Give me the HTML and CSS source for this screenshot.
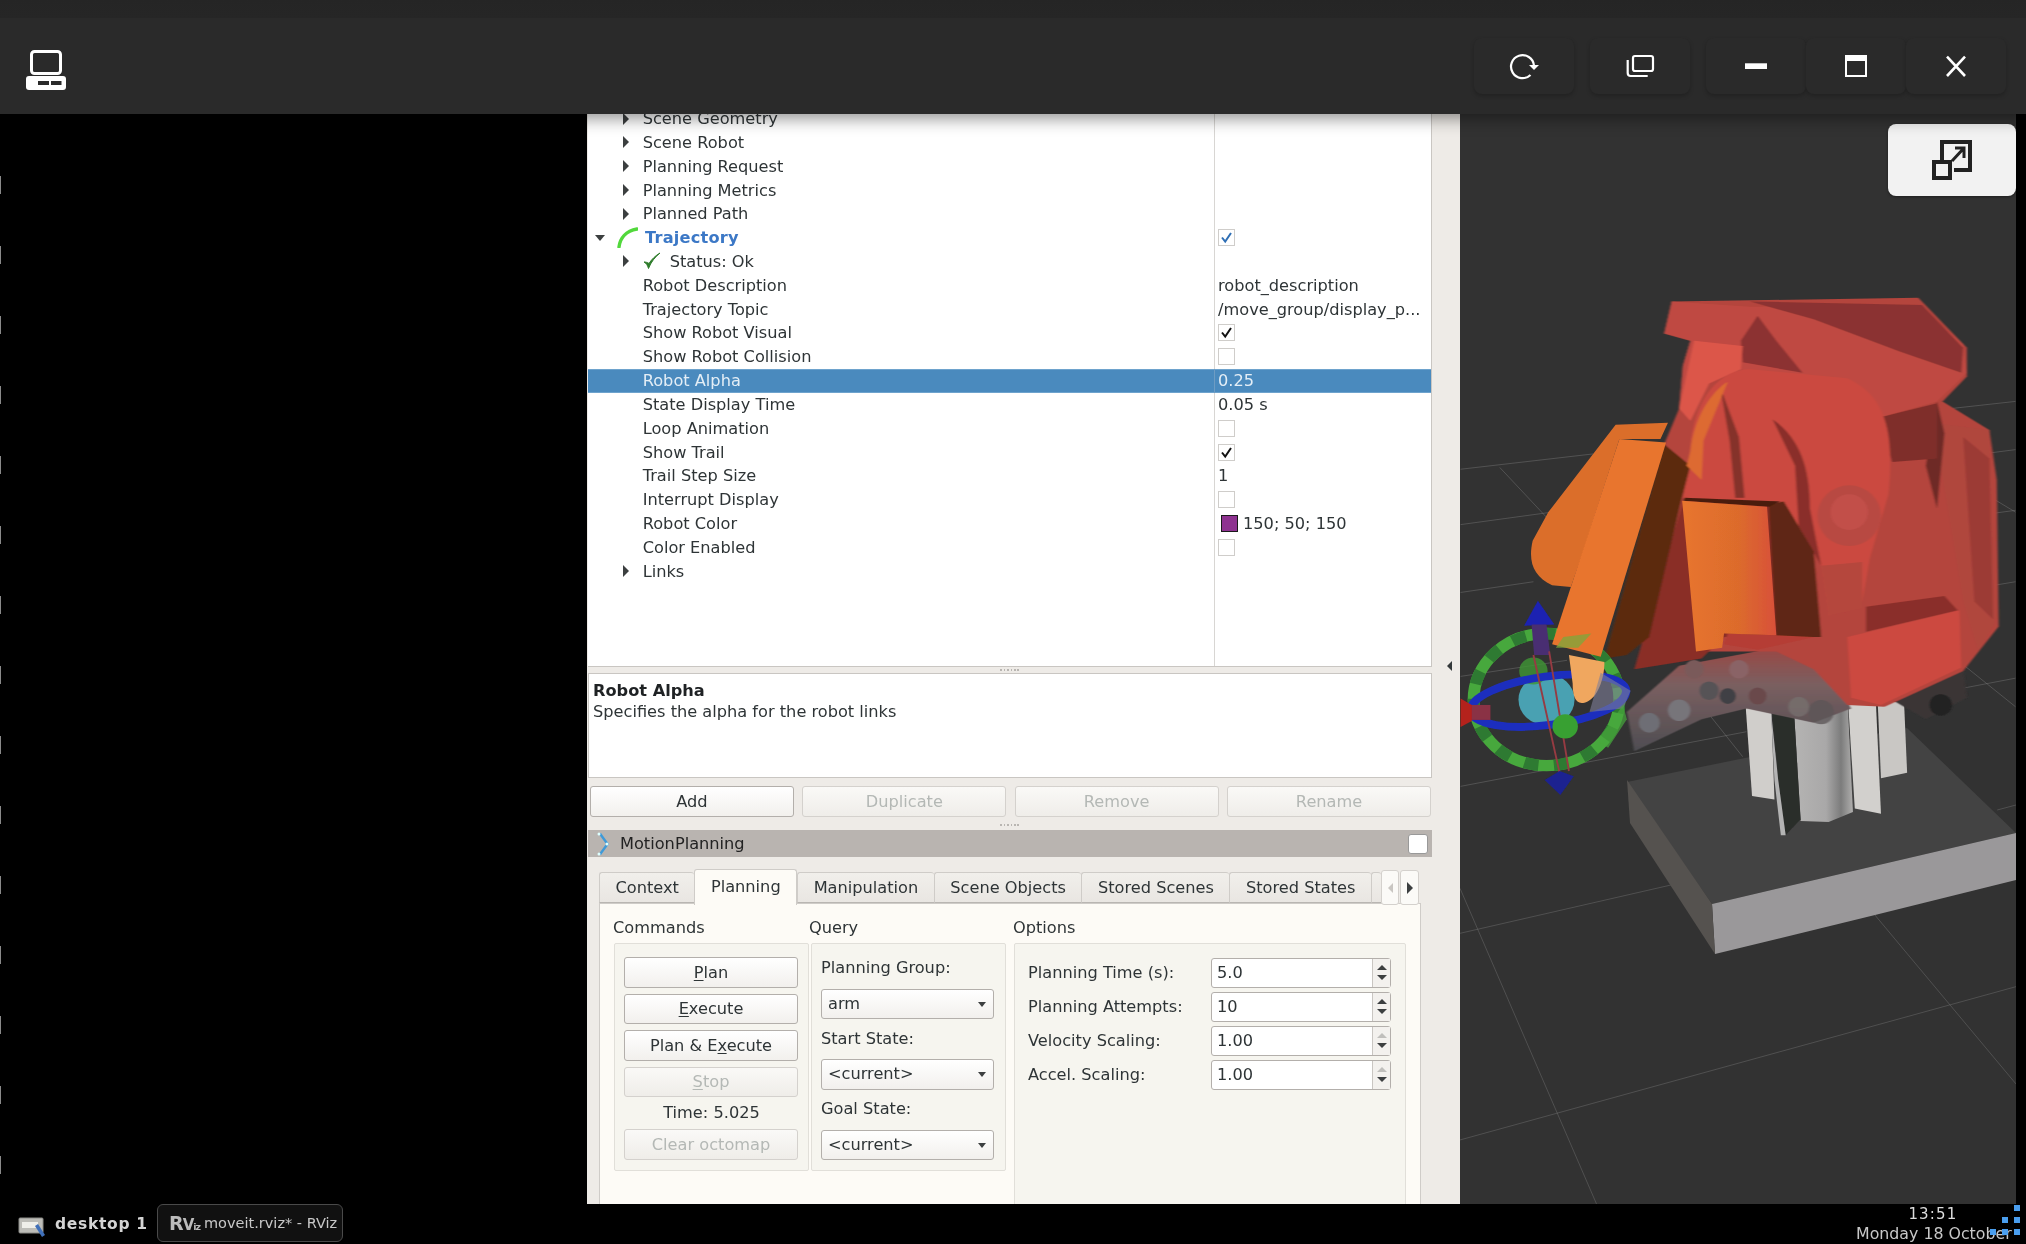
FILE: index.html
```html
<!DOCTYPE html>
<html lang="en">
<head>
<meta charset="utf-8">
<title>moveit.rviz* - RViz</title>
<link rel="stylesheet" href="styles.css">
</head>
<body>
<div class="screen">
  <header class="topbar">
    <svg class="host-icon" width="40" height="40" viewBox="26 50 40 40"><rect x="31.500" y="51.500" width="29" height="22" rx="3" fill="none" stroke="#fff" stroke-width="3"/><rect x="26" y="76" width="40" height="14" rx="3" fill="#fff"/><rect x="38" y="81" width="11" height="4" fill="#2a2a2a"/><rect x="51" y="81" width="10.500" height="4" fill="#2a2a2a"/></svg>
    <div class="win-btns">
      <button class="win-btn"><svg width="32" height="32" viewBox="0 0 32 32"><path d="M26 15.500A11.500 11.500 0 1 0 22.500 25" fill="none" stroke="#fff" stroke-width="2.200"/><path d="M21 15h10l-5 5z" fill="#fff"/></svg></button>
      <button class="win-btn"><svg width="32" height="32" viewBox="0 0 32 32"><rect x="9" y="6" width="20" height="15" rx="2" fill="none" stroke="#fff" stroke-width="2.200"/><path d="M3.700 10v13a3 3 0 0 0 3 3h17" fill="none" stroke="#fff" stroke-width="2.200"/></svg></button>
      <button class="win-btn"><svg width="32" height="32" viewBox="0 0 32 32"><rect x="5" y="13.300" width="22" height="5.700" fill="#fff"/></svg></button>
      <button class="win-btn win-btn-tight"><svg width="32" height="32" viewBox="0 0 32 32"><rect x="6" y="6" width="20" height="20" fill="none" stroke="#fff" stroke-width="2"/><rect x="5" y="5" width="22" height="6" fill="#fff"/></svg></button>
      <button class="win-btn win-btn-tight"><svg width="32" height="32" viewBox="0 0 32 32"><path d="M7 6.700l18 19.300M25 6.700L7 26" fill="none" stroke="#fff" stroke-width="2.600"/></svg></button>
    </div>
  </header>

  <main class="desk">
    <div class="void"><span class="void-edge"></span></div>

    <section class="rviz">
      <div class="tree-col">
        <div class="tree">
          <div class="rows">
            <div class="row"><div class="name child"><i class="arr-r"></i>Scene Geometry</div><div class="val"></div></div>
            <div class="row"><div class="name child"><i class="arr-r"></i>Scene Robot</div><div class="val"></div></div>
            <div class="row"><div class="name child"><i class="arr-r"></i>Planning Request</div><div class="val"></div></div>
            <div class="row"><div class="name child"><i class="arr-r"></i>Planning Metrics</div><div class="val"></div></div>
            <div class="row"><div class="name child"><i class="arr-r"></i>Planned Path</div><div class="val"></div></div>
            <div class="row"><div class="name root"><i class="arr-d"></i><svg class="traj-icon" width="21" height="21" viewBox="0 0 21 21"><path d="M2 20C3 11 9 4 20 2" fill="none" stroke="#52d83c" stroke-width="3.400" stroke-linecap="round"/></svg><b class="traj">Trajectory</b></div><div class="val"><span class="check"><svg width="15" height="15" viewBox="0 0 15 15"><path d="M3 7.500l3.200 4L12 3" fill="none" stroke="#2f6fb5" stroke-width="2"/></svg></span></div></div>
            <div class="row"><div class="name child"><i class="arr-r"></i><svg class="ok-icon" width="18" height="18" viewBox="0 0 18 18"><path d="M1 10c2 1 3.500 3 4.500 6.500C8 10 12 5 17 1c-5 3-8.500 6.500-11 10.500C4.500 10.500 3 10 1 10z" fill="#2f7d2c" stroke="#2f7d2c"/></svg>Status: Ok</div><div class="val"></div></div>
            <div class="row"><div class="name child"><i class="arr-none"></i>Robot Description</div><div class="val">robot_description</div></div>
            <div class="row"><div class="name child"><i class="arr-none"></i>Trajectory Topic</div><div class="val">/move_group/display_p...</div></div>
            <div class="row"><div class="name child"><i class="arr-none"></i>Show Robot Visual</div><div class="val"><span class="check"><svg width="15" height="15" viewBox="0 0 15 15"><path d="M3 7.500l3.200 4L12 3" fill="none" stroke="#111" stroke-width="2"/></svg></span></div></div>
            <div class="row"><div class="name child"><i class="arr-none"></i>Show Robot Collision</div><div class="val"><span class="check"></span></div></div>
            <div class="row row-sel"><div class="name child"><i class="arr-none"></i>Robot Alpha</div><div class="val">0.25</div></div>
            <div class="row"><div class="name child"><i class="arr-none"></i>State Display Time</div><div class="val">0.05 s</div></div>
            <div class="row"><div class="name child"><i class="arr-none"></i>Loop Animation</div><div class="val"><span class="check"></span></div></div>
            <div class="row"><div class="name child"><i class="arr-none"></i>Show Trail</div><div class="val"><span class="check"><svg width="15" height="15" viewBox="0 0 15 15"><path d="M3 7.500l3.200 4L12 3" fill="none" stroke="#111" stroke-width="2"/></svg></span></div></div>
            <div class="row"><div class="name child"><i class="arr-none"></i>Trail Step Size</div><div class="val">1</div></div>
            <div class="row"><div class="name child"><i class="arr-none"></i>Interrupt Display</div><div class="val"><span class="check"></span></div></div>
            <div class="row"><div class="name child"><i class="arr-none"></i>Robot Color</div><div class="val"><span class="swatch"></span>150; 50; 150</div></div>
            <div class="row"><div class="name child"><i class="arr-none"></i>Color Enabled</div><div class="val"><span class="check"></span></div></div>
            <div class="row"><div class="name child"><i class="arr-r"></i>Links</div><div class="val"></div></div>
          </div>
        </div>
        <div class="grip"></div>
        <div class="help">
          <div class="help-title">Robot Alpha</div>
          <div>Specifies the alpha for the robot links</div>
        </div>
        <div class="tool-btns">
          <button class="btn">Add</button>
          <button class="btn" disabled>Duplicate</button>
          <button class="btn" disabled>Remove</button>
          <button class="btn" disabled>Rename</button>
        </div>
        <div class="grip grip-b"></div>
        <div class="dock-title">
          <svg width="14" height="24" viewBox="0 0 14 24"><path d="M2 1l8 11-8 11 3 0 8-11-8-11z" fill="#3f9ad8"/><circle cx="3" cy="2" r="1.500" fill="#dff"/><circle cx="3" cy="22" r="1.500" fill="#dff"/><circle cx="11" cy="12" r="1.500" fill="#dff"/></svg>
          <span class="dock-name">MotionPlanning</span>
          <span class="dock-box"></span>
        </div>
        <div class="tabs-wrap">
          <div class="tabs">
            <div class="tab">Context</div>
            <div class="tab tab-on">Planning</div>
            <div class="tab">Manipulation</div>
            <div class="tab">Scene Objects</div>
            <div class="tab">Stored Scenes</div>
            <div class="tab">Stored States</div>
            <div class="tab tab-cut"></div>
            <div class="tab-scroll"><i class="arr-l"></i></div>
            <div class="tab-scroll"><i class="arr-r"></i></div>
          </div>
          <div class="pane">
            <div class="grp grp-cmd">
              <div class="grp-label">Commands</div>
              <div class="grp-box cmd-box">
                <button class="btn"><u>P</u>lan</button>
                <button class="btn"><u>E</u>xecute</button>
                <button class="btn">Plan &amp; E<u>x</u>ecute</button>
                <button class="btn" disabled><u>S</u>top</button>
                <div class="time">Time: 5.025</div>
                <button class="btn" disabled>Clear octomap</button>
              </div>
            </div>
            <div class="grp grp-query">
              <div class="grp-label">Query</div>
              <div class="grp-box query-box">
                <div class="q-label">Planning Group:</div>
                <div class="combo">arm<i class="arr-d small"></i></div>
                <div class="q-label">Start State:</div>
                <div class="combo">&lt;current&gt;<i class="arr-d small"></i></div>
                <div class="q-label">Goal State:</div>
                <div class="combo">&lt;current&gt;<i class="arr-d small"></i></div>
              </div>
            </div>
            <div class="grp grp-opt">
              <div class="grp-label">Options</div>
              <div class="grp-box opt-box">
                <div class="opt"><span>Planning Time (s):</span><div class="spin"><span class="spin-v">5.0</span><span class="spin-b"><i class="up"></i><i class="dn"></i></span></div></div>
                <div class="opt"><span>Planning Attempts:</span><div class="spin"><span class="spin-v">10</span><span class="spin-b"><i class="up"></i><i class="dn"></i></span></div></div>
                <div class="opt"><span>Velocity Scaling:</span><div class="spin"><span class="spin-v">1.00</span><span class="spin-b"><i class="up off"></i><i class="dn"></i></span></div></div>
                <div class="opt"><span>Accel. Scaling:</span><div class="spin"><span class="spin-v">1.00</span><span class="spin-b"><i class="up off"></i><i class="dn"></i></span></div></div>
              </div>
            </div>
          </div>
        </div>
      </div>
      <div class="side-gap"><i class="arr-l dark"></i></div>
    </section>

    <section class="view">
      <svg class="scene" width="556" height="1090" viewBox="1460 114 556 1090">
        <defs>
          <filter id="soft" x="-5%" y="-5%" width="110%" height="110%"><feGaussianBlur stdDeviation="2.200"/></filter>
          <filter id="soft2" x="-5%" y="-5%" width="110%" height="110%"><feGaussianBlur stdDeviation="0.600"/></filter>
          <linearGradient id="cyl" x1="0" x2="1" y1="0" y2="0"><stop offset="0" stop-color="#b5b4b3"/><stop offset=".55" stop-color="#a9a8a8"/><stop offset=".8" stop-color="#7c7c7c"/><stop offset="1" stop-color="#b0afae"/></linearGradient>
          <linearGradient id="orgfade" x1="0" x2="1" y1="0" y2="0"><stop offset="0" stop-color="#e8752e"/><stop offset=".6" stop-color="#dc6b2c"/><stop offset="1" stop-color="#d8503a"/></linearGradient>
          <linearGradient id="band" x1="0" x2="0" y1="0" y2="1"><stop offset="0" stop-color="#a04440"/><stop offset=".4" stop-color="#7a5f60"/><stop offset="1" stop-color="#4e4d52"/></linearGradient>
        </defs>
        <g fill="none" stroke="#8a8a8a" stroke-width="1">
          <g transform="translate(1440 280) scale(.3737 .3571)">
            <path d="M55 530L410 487M55 685L300 650M55 875L250 845M55 1110L340 1065M55 1418L820 1265M1195 380L1540 340M1210 520L1540 475M1180 695L1540 645M1140 915L1540 845M1240 1175L1540 1115M160 525L290 670M700 1190L810 1335M1205 440L1540 650M1130 850L1540 1195"/>
          </g>
          <g transform="translate(1460 780) scale(.3546 .3333)">
            <path d="M0 460L595 315M0 1080L1568 620M0 325L385 1272M1170 405L1568 912M1515 90L1568 75"/>
          </g>
        </g>
        <polygon points="1627,782 1745,758 1907,728 2016,833 1712,904" fill="#434343"/>
        <polygon points="1712,904 2016,833 2016,880 1875,915 1715,954" fill="#9a989a"/>
        <polygon points="1627,780 1712,904 1715,954 1630,823" fill="#55524f"/>
        <g transform="translate(1440 280) scale(.3737 .3571)" filter="url(#soft2)">
          <path d="M815 1150L885 1160L895 1455L835 1445Z" fill="#d0cecb"/>
          <path d="M945 1170L1090 1160L1105 1490L1040 1518L965 1515Z" fill="url(#cyl)"/>
          <path d="M1090 1150L1165 1150L1180 1495L1110 1480Z" fill="#d2d0cd"/>
          <path d="M1170 1150L1240 1140L1250 1380L1180 1395Z" fill="#c9c7c4"/>
          <path d="M885 1160L945 1170L965 1510L925 1555L905 1400Z" fill="#2c2e2c"/>
          <path d="M885 1200L905 1400L925 1555L912 1555L895 1400Z" fill="#b4b4b4"/>
        </g>
        <g transform="translate(1440 280) scale(.3737 .3571)" filter="url(#soft)">
          <!-- gravel band -->
          <path d="M500 1210L640 1080L1000 1010L1100 1200L1000 1240L820 1200L700 1230L520 1320Z" fill="url(#band)"/>
          <path d="M1200 1170L1400 1085L1410 1170L1300 1230Z" fill="#3a3636"/>
          <circle cx="560" cy="1240" r="28" fill="#6e6e74"/><circle cx="640" cy="1205" r="30" fill="#77747a"/><circle cx="720" cy="1150" r="26" fill="#565256"/><circle cx="770" cy="1165" r="22" fill="#404044"/><circle cx="850" cy="1165" r="24" fill="#6a4a4c"/><circle cx="1020" cy="1210" r="34" fill="#5c5658" opacity=".8"/><circle cx="960" cy="1195" r="28" fill="#77706f" opacity=".8"/><circle cx="1340" cy="1190" r="30" fill="#222"/><circle cx="680" cy="1090" r="26" fill="#7a5a5a"/><circle cx="800" cy="1090" r="26" fill="#8a6466"/>
          <!-- silhouette -->
          <path d="M620 60L1280 50L1410 190L1410 270L1345 340L1470 420L1490 560L1495 970L1400 1095L1190 1195L1090 1190L1000 1090L900 1040L700 1040L620 1000L600 460L640 360L650 240L670 170L600 150Z" fill="#b4443c"/>
          <!-- red body -->
          <path d="M1320 400L1470 420L1485 960L1440 1040L1400 900Z" fill="#b0463e"/>
          <path d="M1400 440L1470 500L1480 950L1430 900Z" fill="#9c3a34"/>
          <path d="M1330 340L1300 520L1330 640L1350 430Z" fill="#6e2a26"/>
          <path d="M1175 385L1330 345L1330 500L1210 510Z" fill="#7f2f2b"/>
          <path d="M620 60L830 75L1280 70L1400 180L1410 260L1330 340L1175 385L1100 300L800 250L700 300L640 360L650 240L670 170L600 150Z" fill="#bf4a42"/>
          <path d="M830 60L1290 70L1400 190L1395 260L1230 200L1000 110Z" fill="#8b3230"/>
          <path d="M850 100L805 170L810 230L970 260L900 170Z" fill="#8c3030"/>
          <path d="M640 360L680 170L810 185L805 250L720 290L670 395Z" fill="#dc564a"/>
          <path d="M670 470C680 330 750 250 830 250L1090 275C1180 320 1220 400 1200 600L1150 780L1130 900L1040 940L1020 800L920 620L650 610Z" fill="#cb4a40"/>
          <path d="M750 300L800 440L815 610L790 610L775 450Z" fill="#85302a"/>
          <path d="M890 390C960 440 990 520 990 640L1020 800L960 690L950 520Z" fill="#8a2f2a"/>
          <circle cx="1095" cy="660" r="85" fill="#b84a42"/><circle cx="1095" cy="650" r="50" fill="#c2504a"/>
          <path d="M1090 1000L1390 925L1395 1085L1180 1190L1100 1170Z" fill="#cc4840"/>
          <path d="M1140 915L1350 885L1385 925L1140 985Z" fill="#8a2f2a"/>
          <!-- dark interior -->
          <path d="M650 620L520 1090L700 1060L760 1000L900 1000L900 620Z" fill="#8a2d25"/>
          <path d="M600 460L670 520L645 620L560 1000L500 1050L440 1060Z" fill="#5c2a10"/>
          <path d="M880 630L920 620L1000 760L1020 1000L900 1000Z" fill="#5e2812"/>
          <path d="M655 610L910 620L880 635L650 618Z" fill="#4a1f10"/>
          <path d="M770 990L900 995L1000 1000L850 1035L760 1020Z" fill="#b53d34"/>
          <path d="M1020 800L1130 790L1130 920L1040 940Z" fill="#b5463e"/>
          <path d="M670 480C680 380 730 310 770 285L705 450L700 560L660 520Z" fill="#dd6a32"/>
        </g>
        <g transform="translate(1440 280) scale(.3737 .3571)" filter="url(#soft2)">
          <!-- marker -->
          <ellipse cx="285" cy="1175" rx="195" ry="185" fill="none" stroke="#47a83c" stroke-width="32"/>
          <ellipse cx="285" cy="1175" rx="195" ry="185" fill="none" stroke="#2e7a30" stroke-width="32" stroke-dasharray="38 42"/>
          <ellipse cx="285" cy="1175" rx="75" ry="72" fill="#4aa1b2"/>
          <circle cx="250" cy="1095" r="38" fill="#3f9636" opacity=".8"/>
          <ellipse cx="290" cy="1178" rx="210" ry="68" transform="rotate(-8 290 1178)" fill="none" stroke="#1d2fbe" stroke-width="22"/>
          <path d="M262 898L306 965L225 968Z" fill="#1a22b2"/>
          <path d="M245 965L285 965L295 1050L252 1050Z" fill="#4a2f72"/>
          <path d="M250 1050L320 1380M292 1040L345 1375" stroke="#963a42" stroke-width="5" fill="none"/>
          <path d="M280 1400L320 1375L358 1390L322 1442Z" fill="#1a2090"/>
          <rect x="80" y="1190" width="55" height="42" fill="#8a3044"/>
          <path d="M55 1172L85 1190L85 1235L55 1252Z" fill="#b4221e"/>
          <circle cx="335" cy="1250" r="34" fill="#38a030"/>
          <!-- orange -->
          <path d="M470 405L610 400L590 445L480 445L380 770L350 860L300 855C250 830 235 790 248 730L290 650Z" fill="#db6e2c"/>
          <path d="M480 445L605 455L430 1055L300 1020Z" fill="#e8742d"/>
          <path d="M648 618L875 635L900 995L760 990L755 1030L685 1040Z" fill="url(#orgfade)"/>
          <path d="M345 1050L440 1070C440 1120 420 1170 395 1180C365 1195 355 1170 355 1130Z" fill="#f0a75f"/>
          <path d="M330 1000L405 990L370 1030L310 1030Z" fill="#7ca83c" opacity=".75"/>
          <path d="M430 1100L510 1150L490 1200L400 1210Z" fill="#7e7f9a" opacity=".6"/>
          <path d="M420 1290L490 1190L500 1230L450 1310Z" fill="#47a83c" opacity=".7"/>
        </g>
      </svg>
      <button class="popout"><svg width="48" height="48" viewBox="0 0 48 48"><path d="M14 24V6h28v28H26" fill="none" stroke="#222" stroke-width="4"/><rect x="6" y="26" width="16" height="16" fill="#f2f2f2" stroke="#222" stroke-width="4"/><path d="M24 25L36 12M27 12h9v10" fill="none" stroke="#222" stroke-width="3"/></svg></button>
    </section>
    <div class="edge"></div>
  </main>

  <footer class="taskbar">
    <svg class="desk-icon" width="28" height="22" viewBox="0 0 28 22"><rect x="1" y="2" width="24" height="15" rx="1" fill="#bdbdb8" stroke="#8a8a86"/><rect x="4" y="6" width="16" height="6" fill="#efefea"/><path d="M17 10l3-2 7 11-3 2z" fill="#3f6fb8"/></svg>
    <span class="desk-name">desktop 1</span>
    <div class="task"><span class="logo">R<em>V</em><small>iz</small></span><span>moveit.rviz* - RViz</span></div>
    <div class="clock"><div class="clock-t">13:51</div><div class="clock-d">Monday 18 October</div></div>
    <div class="dots"><i></i><i></i><i></i><i></i><i></i><i></i></div>
  </footer>
</div>
</body>
</html>
```
FILE: styles.css
```css
* { box-sizing: border-box; }
html, body { margin: 0; padding: 0; background: #000; }
body { width: 2026px; height: 1244px; overflow: hidden; font-family: "DejaVu Sans", sans-serif; font-size: 16.2px; color: #2e3436; }
i { display: block; font-style: normal; }
button { font: inherit; }

.screen { width: 2026px; height: 1244px; display: flex; flex-direction: column; }

/* top bar */
.topbar { height: 114px; flex: none; display: flex; align-items: flex-start; justify-content: space-between; background: linear-gradient(#252525 0, #262626 18px, #2a2a2a 18px); box-shadow: 0 4px 16px rgba(0,0,0,.45); position: relative; z-index: 3; }
.host-icon { margin: 50px 0 0 26px; }
.win-btns { display: flex; gap: 16px; margin: 38px 20px 0 0; }
.win-btn { width: 100px; height: 56px; border: 0; border-radius: 8px; background: #2a2a2a; box-shadow: 0 2px 4px rgba(0,0,0,.22); display: flex; align-items: center; justify-content: center; padding: 0; }
.win-btn-tight { margin-left: -16px; }

/* body */
.desk { flex: 1; min-height: 0; display: flex; position: relative; }
.void { width: 587px; flex: none; background: #000; position: relative; }
.void-edge { position: absolute; left: 0; top: 10px; bottom: 0; width: 1px; background: repeating-linear-gradient(#000 0 52px, #8a8a8a 52px 70px); }
.rviz { width: 873px; flex: none; display: flex; background: #eeebe7; filter: blur(.4px); overflow: hidden; }
.tree-col { width: 845px; margin-left: 1px; flex: none; display: flex; flex-direction: column; min-height: 0; }
.side-gap { flex: 1; display: flex; align-items: flex-start; padding: 547px 0 0 14px; }

/* tree */
.tree { height: 553px; flex: none; overflow: hidden; width: 844px; background: #fff linear-gradient(#d8d6d3, #d8d6d3) 626px 0 / 1px 100% no-repeat; border-right: 1px solid #c9c6c2; border-bottom: 1px solid #c9c6c2; }
.rows { margin-top: -7.4px; }
.row { height: 23.83px; display: flex; align-items: center; }
.row-sel { background: #4a8abe; color: #e4eef6; box-shadow: inset 0 1px 0 #6ea3cd, inset 0 -1px 0 #6ea3cd; }
.name { width: 626px; flex: none; display: flex; align-items: center; height: 100%; white-space: nowrap; }
.child { padding-left: 34.700px; }
.root { padding-left: 7px; }
.val { flex: 1; height: 100%; display: flex; align-items: center; padding-left: 3px; border-left: 1px solid #d8d6d3; white-space: nowrap; }
.row-sel .val { border-left-color: #6e9cc3; }
.arr-r { width: 20px; height: 0; flex: none; position: relative; }
.arr-r::before { content: ""; position: absolute; left: 0; top: -6px; border-style: solid; border-width: 6px 0 6px 6.500px; border-color: transparent transparent transparent #3c3f40; }
.arr-none { width: 20px; flex: none; }
.arr-d { width: 22px; height: 0; flex: none; position: relative; }
.arr-d::before { content: ""; position: absolute; left: 0; top: -3px; border-style: solid; border-width: 6.500px 5.500px 0; border-color: #3c3f40 transparent transparent; }
.arr-d.small { position: absolute; right: 5px; top: 50%; width: 10px; }
.arr-d.small::before { border-width: 5px 4.500px 0; top: -2px; }
.arr-l { width: 0; height: 0; border-style: solid; border-width: 5.500px 5.500px 5.500px 0; border-color: transparent #c9c6c2 transparent transparent; }
.arr-l.dark { border-right-color: #33383a; }
.traj-icon { flex: none; margin-right: 7px; }
.traj { color: #3c78c6; font-weight: bold; letter-spacing: .2px; }
.ok-icon { flex: none; margin: 0 9px 0 0; }
.check { width: 17px; height: 17px; background: #fff; border: 1.500px solid #cfcdca; display: flex; align-items: center; justify-content: center; flex: none; }
.swatch { width: 17px; height: 17px; margin: 0 5px 0 3px; background: #8e3290; border: 1.500px solid #1a1a1a; flex: none; }

.grip { height: 6px; flex: none; position: relative; }
.grip::before { content: ""; position: absolute; left: 412px; top: 2px; width: 21px; height: 2px; background: repeating-linear-gradient(90deg, #b9b6b2 0 1.500px, transparent 1.500px 3.500px); }
.grip-b { height: 13px; }
.grip-b::before { top: 7px; }

.help { height: 105px; width: 844px; flex: none; background: #fff; border: 1px solid #c9c6c2; padding: 5.500px 4px; line-height: 21.500px; }
.help-title { font-weight: bold; color: #1f2224; }

.tool-btns { display: flex; gap: 8.500px; padding: 8px 2px 0; flex: none; }
.tool-btns .btn { width: 204px; height: 31px; }
.btn { display: block; border: 1px solid #b3afab; border-radius: 3px; background: linear-gradient(#fff, #f2f0ed); color: #2e3436; padding: 0; text-align: center; }
.btn:disabled { border-color: #d4d1cd; color: #b4b8b5; background: linear-gradient(#faf9f7, #efede9); }
.btn u { text-underline-offset: 2px; }

.dock-title { width: 844px; height: 27px; flex: none; background: #b9b4b0; display: flex; align-items: center; padding: 0 4px 0 8px; }
.dock-name { margin-left: 10px; flex: 1; color: #222; }
.dock-box { width: 20px; height: 20px; background: #fff; border: 1px solid #999; border-radius: 3px; }

/* tabs */
.tabs-wrap { flex: 1; min-height: 0; display: flex; flex-direction: column; padding: 12px 0 0 11px; width: 844px; }
.tabs { height: 36px; flex: none; display: flex; align-items: flex-end; position: relative; z-index: 1; }
.tab { height: 31px; padding: 0 15.500px; background: linear-gradient(#f1efeb, #e9e6e2); border: 1px solid #cfccc8; border-right: 0; border-bottom: 1px solid #b9b6b2; border-radius: 3px 3px 0 0; display: flex; align-items: center; flex: none; white-space: nowrap; margin-bottom: 2px; }
.tab-on { height: 36px; background: #fdfbf6; border: 1px solid #cfccc8; border-bottom: 0; margin-bottom: 0; padding-bottom: 3px; }
.tab-cut { width: 10px; padding: 0; }
.tab-scroll { width: 18.500px; height: 35px; margin-right: 1px; background: #fbfaf7; border: 1px solid #d4d1cd; border-radius: 3px; display: flex; align-items: center; justify-content: center; flex: none; }
.tab-scroll .arr-r { width: 6px; }
.pane { flex: 1; min-height: 0; width: 822px; background: #fdfbf6; border: 1px solid #cfccc8; border-bottom: 0; margin-top: -2px; display: flex; padding: 14px 0 0 13px; overflow: hidden; }
.grp { flex: none; display: flex; flex-direction: column; }
.grp-label { height: 25px; flex: none; line-height: 20px; white-space: nowrap; }
.grp-cmd { width: 196px; }
.grp-query { width: 205px; }
.grp-opt { width: 392px; margin-left: -1px; }
.grp-box { background: #f6f5ef; border: 1px solid #e1dfd9; border-radius: 2px; flex: none; }
.cmd-box { width: 195px; height: 228px; padding: 13px 9px 0; display: flex; flex-direction: column; gap: 6px; margin-left: 1px; }
.cmd-box .btn { height: 30.500px; flex: none; width: 174px; }
.time { height: 20px; line-height: 20px; text-align: center; flex: none; }
.query-box { width: 195px; height: 228px; padding: 12px 11px 0 9px; margin-left: 2px; display: flex; flex-direction: column; }
.q-label { height: 32.500px; line-height: 24px; flex: none; white-space: nowrap; }
.combo { height: 30.500px; flex: none; position: relative; border: 1px solid #b3afab; border-radius: 3px; background: linear-gradient(#fff, #f2f0ed); padding-left: 6px; line-height: 27px; margin-bottom: 7.500px; }
.opt-box { width: 392px; height: 400px; margin-left: 1px; padding: 14px 14px 0 13px; display: flex; flex-direction: column; gap: 4.500px; }
.opt { height: 29.500px; display: flex; align-items: center; justify-content: space-between; flex: none; white-space: nowrap; }
.spin { width: 180px; height: 100%; display: flex; background: #fff; border: 1px solid #b3afab; border-radius: 3px; }
.spin-v { flex: 1; padding-left: 5px; line-height: 28px; }
.spin-b { width: 18px; flex: none; display: flex; flex-direction: column; align-items: center; justify-content: center; gap: 5px; border-left: 1px solid #c9c6c2; background: #f3f1ee; }
.up, .dn { width: 0; height: 0; border-style: solid; }
.up { border-width: 0 5px 5px; border-color: transparent transparent #3c3f40; }
.up.off { border-bottom-color: #c0bfbc; }
.dn { border-width: 5px 5px 0; border-color: #3c3f40 transparent transparent; }

/* viewport */
.view { width: 556px; flex: none; background: #323232; position: relative; overflow: hidden; }
.scene { display: block; }
.popout { position: absolute; right: 0; top: 10px; width: 128px; height: 72px; border: 0; border-radius: 8px; background: #f2f2f2; box-shadow: 0 1px 3px rgba(0,0,0,.4); display: flex; align-items: center; justify-content: center; padding: 0; }
.edge { flex: 1; background: #000; }

/* taskbar */
.taskbar { height: 40px; flex: none; background: #000; display: flex; align-items: flex-start; position: relative; padding-left: 18px; filter: blur(.3px); color: #ccc; }
.desk-icon { margin-top: 12px; flex: none; }
.desk-name { margin-left: 9px; margin-top: 11px; width: 102px; font-size: 15.500px; font-weight: bold; letter-spacing: .7px; color: #d4d4d4; white-space: nowrap; }
.task { height: 38px; width: 186px; border: 1px solid #4a4a4a; border-radius: 6px; background: #111; display: flex; align-items: center; padding-left: 11px; font-size: 14.500px; color: #c8c8c8; white-space: nowrap; }
.logo { font-family: "DejaVu Sans", sans-serif; font-weight: bold; font-size: 19px; color: #bbb; width: 35px; letter-spacing: -1px; display: inline-flex; align-items: baseline; }
.logo em { font-style: normal; font-size: 15px; }
.logo small { font-size: 9.500px; }
.clock { position: absolute; right: 16px; top: 1px; width: 154px; text-align: center; font-size: 15.800px; line-height: 19px; color: #c8c8c8; white-space: nowrap; }
.clock-t { font-size: 15px; letter-spacing: 1.200px; color: #ddd; }
.dots { position: absolute; right: 6px; top: 1px; width: 30px; height: 30px; display: grid; grid-template-columns: repeat(3, 6px); grid-auto-rows: 6px; gap: 6px; justify-content: end; }
.dots i { background: #4a9eee; }
.dots i:nth-child(1) { grid-column: 3; grid-row: 1; }
.dots i:nth-child(2) { grid-column: 2; grid-row: 2; }
.dots i:nth-child(3) { grid-column: 3; grid-row: 2; }
.dots i:nth-child(4) { grid-column: 1; grid-row: 3; }
.dots i:nth-child(5) { grid-column: 2; grid-row: 3; }
.dots i:nth-child(6) { grid-column: 3; grid-row: 3; }
```
